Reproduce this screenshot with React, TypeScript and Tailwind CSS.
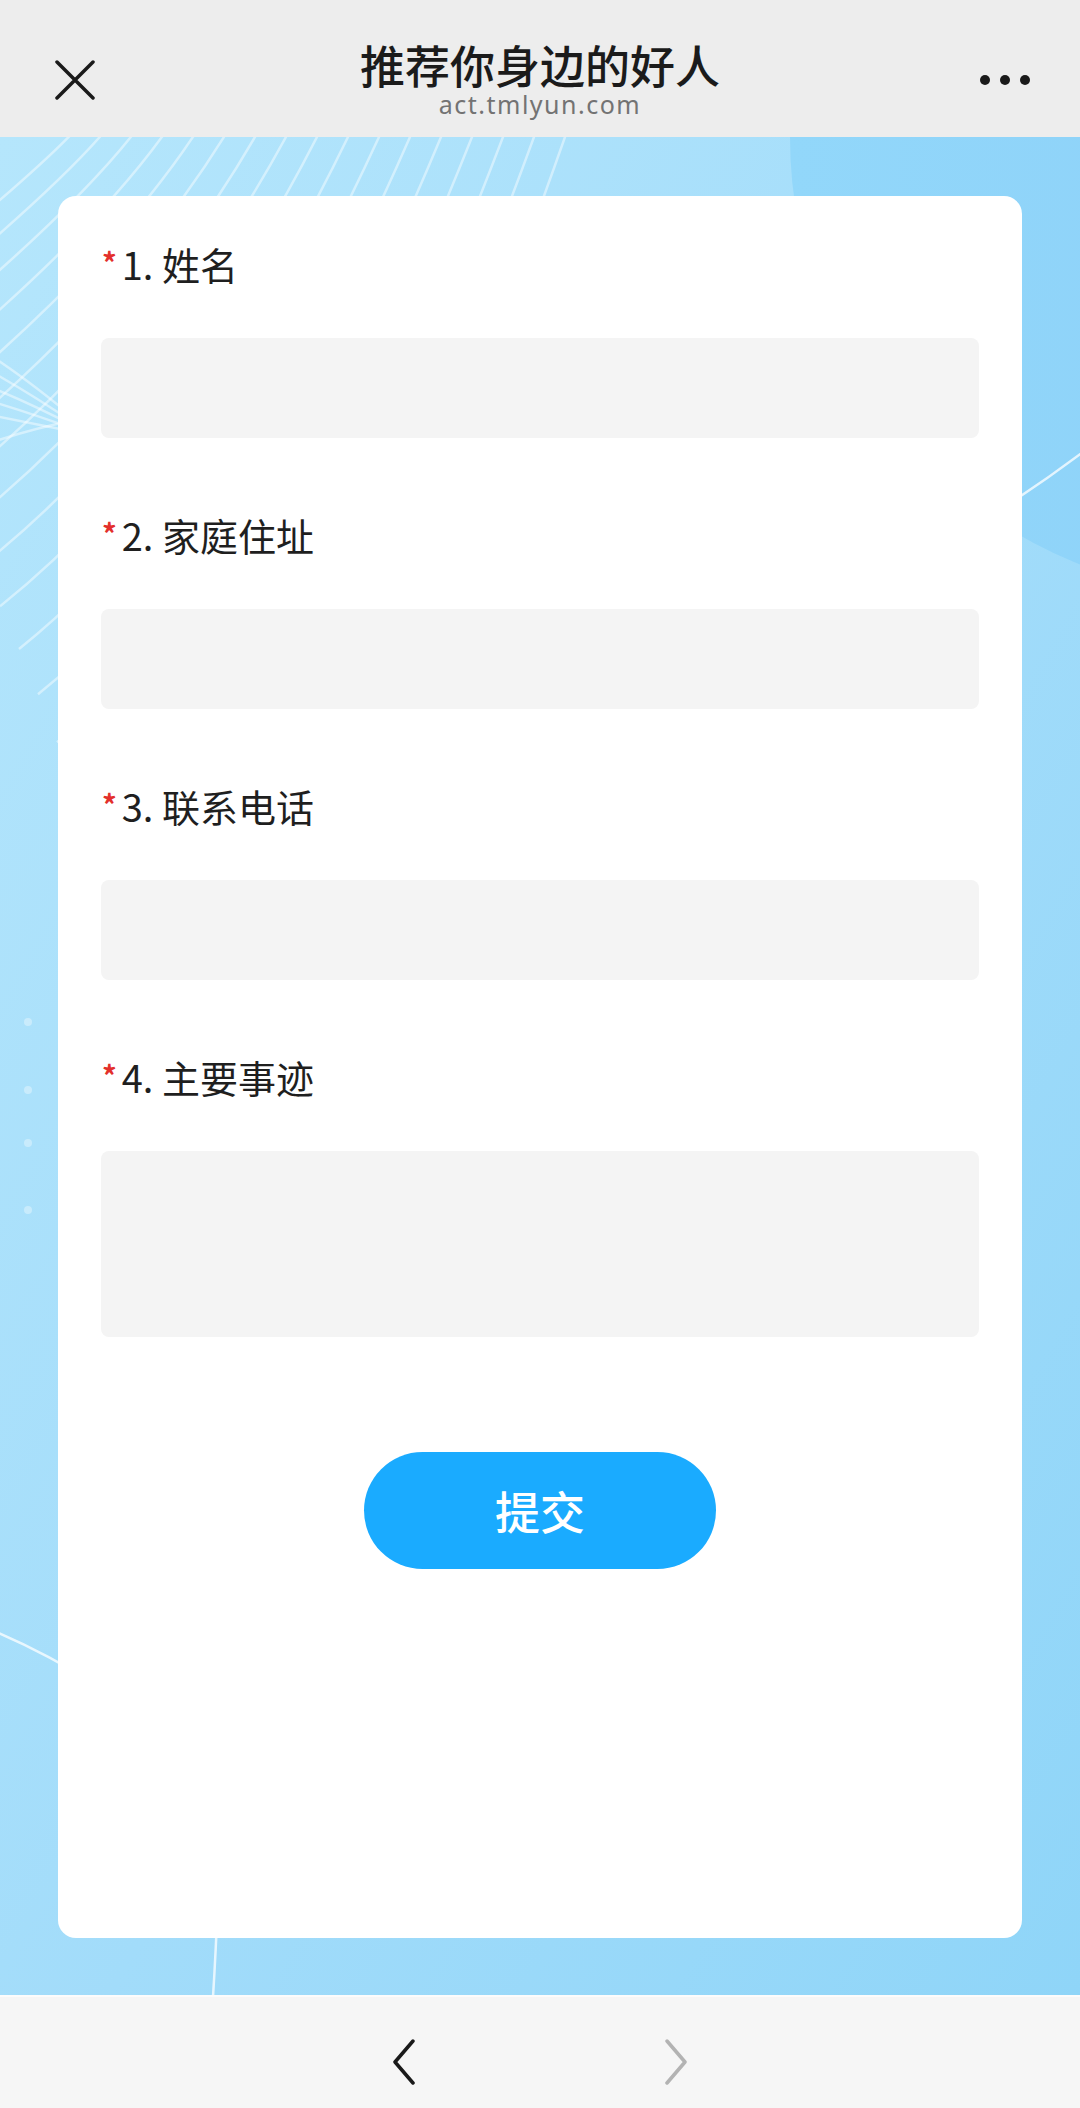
import React from 'react';

const fields = [
  { no: '1.', label: '姓名', tall: false },
  { no: '2.', label: '家庭住址', tall: false },
  { no: '3.', label: '联系电话', tall: false },
  { no: '4.', label: '主要事迹', tall: true },
];

// diagonal white strokes in the top-left corner of the backdrop
const strokes = Array.from({ length: 17 }, (_, i) => {
  const xt = 69 + 31 * i;
  const s = 1.1 + 0.11 * i;
  const a = 40 + 12 * i;
  const p1x = xt - a;
  const p1y = a * s;
  return `M ${xt + 10 / s} -10 Q ${p1x} ${p1y} ${p1x - 200} ${p1y + 160}`;
});

const mesh = [
  'M -10 218 Q 30 244 80 286',
  'M -10 234 Q 30 256 80 290',
  'M -10 250 Q 30 266 80 292',
  'M -10 264 Q 30 276 80 294',
  'M -10 278 Q 30 286 80 296',
  'M -10 306 Q 30 292 80 282',
];

function Backdrop() {
  return (
    <svg
      className="absolute inset-0 h-full w-full"
      viewBox="0 0 1080 1858"
      preserveAspectRatio="none"
    >
      <defs>
        <linearGradient id="base" x1="0" y1="0" x2="1" y2="1">
          <stop offset="0" stopColor="#b5e6fc" />
          <stop offset="0.55" stopColor="#a2dcfa" />
          <stop offset="1" stopColor="#8fd5f8" />
        </linearGradient>
        <linearGradient id="blob" x1="0" y1="0" x2="1" y2="0">
          <stop offset="0" stopColor="#92d7fa" />
          <stop offset="1" stopColor="#8acdf7" />
        </linearGradient>
      </defs>
      <rect x="0" y="0" width="1080" height="1858" fill="url(#base)" />
      <circle cx="1250" cy="0" r="460" fill="url(#blob)" />
      <g fill="none" stroke="#ffffff" strokeOpacity="0.45" strokeWidth="2.5">
        {strokes.map((d, i) => (
          <path key={i} d={d} />
        ))}
        {mesh.map((d, i) => (
          <path key={`m${i}`} d={d} />
        ))}
      </g>
      <g fill="none" stroke="#ffffff" strokeOpacity="0.75" strokeWidth="2.5">
        <path d="M 900 432 Q 1010 372 1100 302" />
        <path d="M -50 1478 Q 20 1500 100 1550" />
        <path d="M 222 1650 Q 218 1780 213 1860" />
      </g>
      <g fill="#ffffff" fillOpacity="0.35">
        <circle cx="28" cy="885" r="4" />
        <circle cx="28" cy="953" r="4" />
        <circle cx="28" cy="1006" r="4" />
        <circle cx="28" cy="1073" r="4" />
      </g>
    </svg>
  );
}

export default function App() {
  return (
    <div
      className="w-[1080px] h-[2108px] flex flex-col"
      style={{ fontFamily: '"Noto Sans", "Noto Sans CJK SC", sans-serif' }}
    >
      {/* top bar */}
      <div className="h-[137px] shrink-0 bg-[#ededed] pt-[22px] grid grid-cols-[200px_1fr_200px] items-center">
        <div className="pl-[55px]">
          <svg width="40" height="40" viewBox="0 0 40 40">
            <path d="M 2 2 L 38 38 M 38 2 L 2 38" stroke="#1a1a1a" strokeWidth="3.5" strokeLinecap="round" />
          </svg>
        </div>
        <div className="flex flex-col items-center">
          <div className="text-[45px] leading-[48px] font-medium text-[#1b1b1b]" style={{ fontFamily: '"Noto Sans CJK SC", sans-serif' }}>
            推荐你身边的好人
          </div>
          <div className="text-[25px] leading-[30px] tracking-[1.5px] text-[#737373]">act.tmlyun.com</div>
        </div>
        <div className="flex justify-end pr-[50px]">
          <svg width="50" height="10" viewBox="0 0 50 10">
            <circle cx="5" cy="5" r="5" fill="#1a1a1a" />
            <circle cx="25" cy="5" r="5" fill="#1a1a1a" />
            <circle cx="45" cy="5" r="5" fill="#1a1a1a" />
          </svg>
        </div>
      </div>

      {/* page body */}
      <div className="relative h-[1858px] shrink-0 pt-[59px] px-[58px] overflow-hidden">
        <Backdrop />
        <div className="relative h-[1742px] bg-white rounded-[18px] px-[43px] pt-[47px]">
          <div className="flex flex-col gap-[76px]">
            {fields.map((f) => (
              <div key={f.no}>
                <div
                  className="flex h-[50px] mb-[45px] text-[38px] leading-[42px] text-[#1f1f1f]"
                  style={{ fontFamily: '"Noto Sans CJK SC", sans-serif' }}
                >
                  <span className="ml-[1px] mt-[4px] mr-[5px] text-[29px] leading-[28px] font-bold text-[#e3302b]">*</span>
                  <span>{f.no}&nbsp;{f.label}</span>
                </div>
                <div className={`${f.tall ? 'h-[186px]' : 'h-[100px]'} rounded-[8px] bg-[#f4f4f4]`} />
              </div>
            ))}
          </div>
          <div className="flex justify-center mt-[115px]">
            <button
              className="w-[352px] h-[117px] rounded-full bg-[#1aabff] text-white text-[45px] leading-none font-medium"
              style={{ fontFamily: '"Noto Sans CJK SC", sans-serif' }}
            >
              提交
            </button>
          </div>
        </div>
      </div>

      {/* bottom nav */}
      <div className="h-[113px] shrink-0 bg-[#f6f6f6] border-t-[2px] border-[#fcfcfc] pt-[18px] flex items-center justify-center gap-[250px]">
        <svg width="22" height="46" viewBox="0 0 22 46">
          <polyline points="20,2 2,23 20,44" fill="none" stroke="#1a1a1a" strokeWidth="3.5" strokeLinecap="round" strokeLinejoin="round" />
        </svg>
        <svg width="22" height="46" viewBox="0 0 22 46">
          <polyline points="2,2 20,23 2,44" fill="none" stroke="#b3b3b3" strokeWidth="3.5" strokeLinecap="round" strokeLinejoin="round" />
        </svg>
      </div>
    </div>
  );
}
